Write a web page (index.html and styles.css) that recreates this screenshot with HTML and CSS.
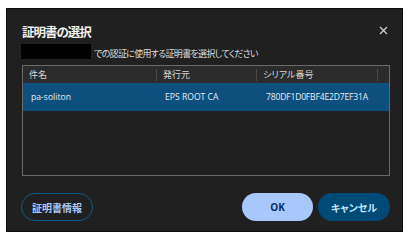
FILE: index.html
```html
<!DOCTYPE html>
<html lang="ja">
<head>
<meta charset="utf-8">
<link rel="stylesheet" href="styles.css">
</head>
<body>
<div class="dialog">
  <div class="title-row">
    <h1 class="title">証明書の選択</h1>
    <svg class="close" width="9" height="9" viewBox="0 0 9 9"><path d="M1 1L8 8M8 1L1 8" stroke="#d0d0d0" stroke-width="1.3" fill="none"/></svg>
  </div>
  <div class="sub-row">
    <span class="redact"></span>
    <span class="sub">での認証に使用する証明書を選択してください</span>
  </div>
  <div class="table">
    <div class="thead">
      <div class="th c1">件名</div>
      <div class="th c2">発行元</div>
      <div class="th c3">シリアル番号</div>
      <div class="th c4"></div>
    </div>
    <div class="tr selected">
      <div class="td c1">pa-soliton</div>
      <div class="td c2">EPS ROOT CA</div>
      <div class="td c3">780DF1D0FBF4E2D7EF31A</div>
    </div>
  </div>
  <div class="actions">
    <button class="btn outline">証明書情報</button>
    <div class="spacer"></div>
    <button class="btn ok">OK</button>
    <button class="btn cancel">キャンセル</button>
  </div>
</div>
</body>
</html>
```

FILE: styles.css
```css
* { box-sizing: border-box; }
html, body { margin: 0; padding: 0; background: #ffffff; }
body {
  font-family: "Noto Sans CJK JP", "Noto Sans", sans-serif;
  font-feature-settings: "palt";
  width: 411px;
  height: 238px;
  overflow: hidden;
}
.dialog {
  margin: 8px 0 0 6px;
  width: 397px;
  height: 224px;
  background: #202020;
  border: 1px solid #0c0c0c;
  padding: 13px 12px 0 15px;
  display: flex;
  flex-direction: column;
  color: #e6e6e6;
}
.title-row {
  display: flex;
  align-items: center;
  justify-content: space-between;
  height: 20px;
}
.title {
  margin: 0;
  font-size: 12.5px;
  font-weight: 700;
  letter-spacing: -1px;
  color: #f0f0f0;
  line-height: 20px;
}
.close { margin-right: 2px; margin-top: -4px; }
.sub-row {
  display: flex;
  align-items: center;
  height: 15px;
  margin-top: 2px;
}
.redact {
  width: 70px;
  height: 15px;
  background: #000;
  margin-left: -1px;
}
.sub {
  font-size: 9px;
  letter-spacing: -0.7px;
  color: #dcdcdc;
  margin-left: 3px;
  line-height: 15px;
  padding-top: 3px;
}
.table {
  margin-top: 6px;
  height: 111px;
  border: 1px solid #6a6a6a;
  background: #202020;
}
.thead {
  display: flex;
  height: 17px;
  background: #2b2b2b;
  align-items: center;
}
.th {
  font-size: 9px;
  color: #d8d8d8;
  height: 17px;
  line-height: 17px;
  position: relative;
}
.th.c2::before, .th.c3::before, .th.c4::before {
  content: "";
  position: absolute;
  left: 0;
  top: 3px;
  height: 12px;
  border-left: 1px solid #4a4a4a;
}
.c1 { width: 133px; padding-left: 6px; }
.c2 { width: 100px; padding-left: 7px; }
.c3 { width: 121px; padding-left: 7px; }
.c4 { flex: 1; }
.tr {
  display: flex;
  height: 28px;
  align-items: center;
}
.tr.selected { background: #0d4f7d; }
.td {
  font-family: "Open Sans", "Noto Sans", sans-serif;
  font-size: 8.6px;
  color: #e8eef4;
  line-height: 28px;
}
.td.c1 { padding-left: 8px; }
.td.c2 { padding-left: 9px; }
.td.c3 { padding-left: 10px; letter-spacing: -0.2px; }
.actions {
  display: flex;
  align-items: center;
  margin-top: 17px;
  height: 28px;
}
.spacer { flex: 1; }
.btn {
  height: 28px;
  border-radius: 14px;
  font-family: "Noto Sans CJK JP", "Noto Sans", sans-serif;
  font-feature-settings: "palt";
  font-size: 10px;
  font-weight: 700;
  padding: 0;
  border: none;
  cursor: pointer;
}
.outline {
  width: 72px;
  margin-left: -1px;
  background: transparent;
  border: 1.5px solid #0b5a85;
  color: #a8c7fa;
}
.ok {
  width: 71px;
  background: #a8c7fa;
  color: #062e6f;
  font-family: "Open Sans", sans-serif;
}
.cancel {
  width: 72px;
  margin-left: 5px;
  background: #004a77;
  color: #c2e7ff;
}
```
